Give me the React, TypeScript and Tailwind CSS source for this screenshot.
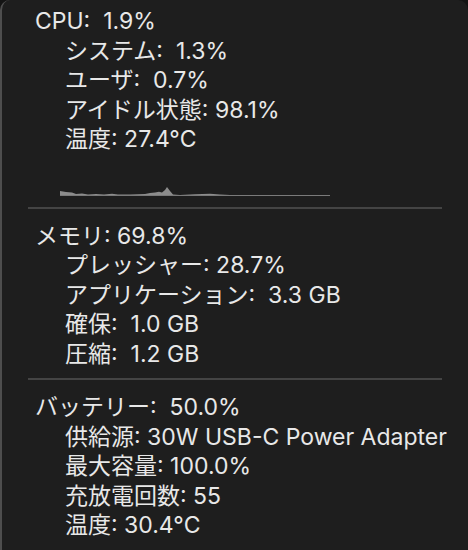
const font = { fontFamily: '"Inter", "Noto Sans CJK JP", sans-serif' };

function Row({ label, value, indent }: { label: string; value: string; indent?: boolean }) {
  return (
    <div className={`whitespace-pre ${indent ? "pl-[63px]" : "pl-[33px]"}`}>
      {label}
      {value}
    </div>
  );
}

function CpuGraph() {
  return (
    <svg width="270" height="42" className="ml-[58px] block" viewBox="0 0 270 42">
      <path
        d="M0 40.5 L0 36 L6 37 L12 37.5 L16 39 L22 38.5 L28 39.5 L36 39 L44 39.5 L52 38.8 L58 39.6 L70 39.6 L85 39 L90 38 L95 37.5 L99 36.8 L102 37.5 L105 35 L107 32 L110 36 L113 39.5 L120 40 L135 39.3 L150 38.8 L160 39.6 L170 40 L270 40 L270 40.5 Z"
        fill="#8c8c8c"
      />
      <line x1="0" y1="40.5" x2="270" y2="40.5" stroke="#7a7a7a" strokeWidth="1" />
    </svg>
  );
}

function Divider() {
  return <div className="ml-[26px] h-[2px] w-[414px] bg-[#444444]" />;
}

export default function App() {
  return (
    <div className="h-[550px] w-[468px] overflow-hidden bg-[#141414]">
      <div
        className="h-[560px] w-[468px] rounded-t-[10px] border-l-2 border-[#4e4e4e] bg-[#1e1e1e] text-[23px] leading-[29.5px] text-[#e8e8e8]"
        style={font}
      >
        {/* CPU */}
        <div className="pt-[7px]">
          <Row label="CPU:  " value="1.9%" />
          <Row label="システム:  " value="1.3%" indent />
          <Row label="ユーザ:  " value="0.7%" indent />
          <Row label="アイドル状態: " value="98.1%" indent />
          <Row label="温度: " value="27.4°C" indent />
        </div>
        <CpuGraph />
        <div className="mt-[10px]">
          <Divider />
        </div>

        {/* メモリ */}
        <div className="pt-[13px]">
          <Row label="メモリ: " value="69.8%" />
          <Row label="プレッシャー: " value="28.7%" indent />
          <Row label="アプリケーション:  " value="3.3 GB" indent />
          <Row label="確保:  " value="1.0 GB" indent />
          <Row label="圧縮:  " value="1.2 GB" indent />
        </div>
        <div className="mt-[9px]">
          <Divider />
        </div>

        {/* バッテリー */}
        <div className="pt-[13px]">
          <Row label="バッテリー:  " value="50.0%" />
          <Row label="供給源: " value="30W USB-C Power Adapter" indent />
          <Row label="最大容量: " value="100.0%" indent />
          <Row label="充放電回数: " value="55" indent />
          <Row label="温度: " value="30.4°C" indent />
        </div>
      </div>
    </div>
  );
}
